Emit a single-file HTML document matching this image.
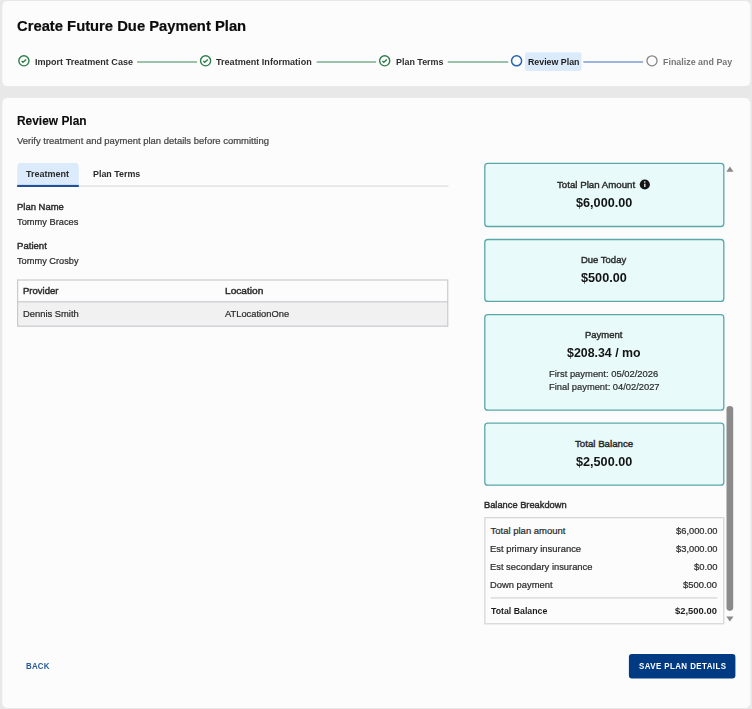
<!DOCTYPE html>
<html lang="en">
<head>
<meta charset="utf-8">
<title>Create Future Due Payment Plan</title>
<style>
*{box-sizing:border-box;margin:0;padding:0}
html,body{width:752px;height:709px;overflow:hidden}
body{background:#e8e8e8;font-family:"Liberation Sans",Arial,sans-serif;color:#1e1e1e;position:relative}
.t{position:absolute;white-space:nowrap;line-height:normal;transform-origin:0 0}
#shapes{position:absolute;left:0;top:0;width:752px;height:709px}
</style>
</head>
<body>
<svg id="shapes" viewBox="0 0 752 709">
<defs><filter id="soft" x="-5%" y="-5%" width="110%" height="110%"><feGaussianBlur stdDeviation="0.45"/></filter></defs>
<g filter="url(#soft)"><rect x="2.3" y="1.1" width="748" height="85" rx="5" fill="#fcfcfc"/><rect x="2.3" y="98.1" width="748" height="609.8" rx="5" fill="#fcfcfc"/></g>
<circle cx="23.9" cy="60.8" r="5.05" fill="none" stroke="#2e7d4b" stroke-width="1.4"/><path d="M21.60 60.90 L23.00 62.20 L26.10 59.40" fill="none" stroke="#2e7d4b" stroke-width="1.4"/>
<rect x="137.1" y="61.3" width="59.9" height="1.4" fill="#74ab86"/>
<circle cx="205.6" cy="60.8" r="5.05" fill="none" stroke="#2e7d4b" stroke-width="1.4"/><path d="M203.30 60.90 L204.70 62.20 L207.80 59.40" fill="none" stroke="#2e7d4b" stroke-width="1.4"/>
<rect x="316.6" y="61.3" width="59.6" height="1.4" fill="#74ab86"/>
<circle cx="384.7" cy="60.8" r="5.05" fill="none" stroke="#2e7d4b" stroke-width="1.4"/><path d="M382.40 60.90 L383.80 62.20 L386.90 59.40" fill="none" stroke="#2e7d4b" stroke-width="1.4"/>
<rect x="447.7" y="61.3" width="60.6" height="1.4" fill="#74ab86"/>
<circle cx="516.6" cy="60.8" r="5.05" fill="none" stroke="#2563b5" stroke-width="1.5"/>
<rect x="525" y="52.2" width="56.5" height="18.8" fill="#dcebfb" rx="2"/>
<rect x="583.4" y="61.3" width="59.6" height="1.4" fill="#7298cf"/>
<circle cx="652" cy="60.8" r="5.05" fill="none" stroke="#828282" stroke-width="1.25"/>
<rect x="17.2" y="185.3" width="431.3" height="1.6" fill="#e4e4e4"/>
<path d="M17.2 187 V166.9 a4 4 0 0 1 4 -4 H74.8 a4 4 0 0 1 4 4 V187 Z" fill="#dcebfb"/>
<rect x="17.2" y="184.9" width="61.6" height="2.1" fill="#1f4e9a"/>
<rect x="17.6" y="280.0" width="430.15" height="46.2" fill="#fcfcfc"/>
<rect x="17.6" y="301.8" width="430.15" height="24.4" fill="#f1f1f1"/>
<rect x="17.6" y="301.2" width="430.15" height="1.2" fill="#c8cace"/>
<rect x="17.6" y="280.0" width="430.15" height="46.2" fill="none" stroke="#c8cace" stroke-width="1.2"/>
<rect x="484.8" y="163.4" width="239.0" height="63.1" fill="#e8fbfa" rx="3" stroke="#5aa7a9" stroke-width="1.3"/>
<rect x="484.8" y="239.5" width="239.0" height="61.9" fill="#e8fbfa" rx="3" stroke="#5aa7a9" stroke-width="1.3"/>
<rect x="484.8" y="314.7" width="239.0" height="95.5" fill="#e8fbfa" rx="3" stroke="#5aa7a9" stroke-width="1.3"/>
<rect x="484.8" y="423.2" width="239.0" height="62.0" fill="#e8fbfa" rx="3" stroke="#5aa7a9" stroke-width="1.3"/>
<circle cx="644.8" cy="184.5" r="5.1" fill="#161616"/><rect x="644.2" y="183.7" width="1.25" height="3.3" fill="#fff"/><circle cx="644.8" cy="182" r="0.8" fill="#fff"/>
<rect x="484.9" y="517.7" width="238.85" height="106.1" fill="#fcfcfc" stroke="#d4d4d4" stroke-width="1.2"/>
<rect x="490.8" y="597.2" width="226.5" height="1.4" fill="#d9d9d9"/>
<path d="M726.3 171.8 L729.9 166.6 L733.5 171.8 Z" fill="#8a8a8a"/>
<rect x="726.5" y="406" width="6.7" height="204.9" fill="#8b8b8b" rx="3.3"/>
<path d="M726.3 616.4 L729.9 621.6 L733.5 616.4 Z" fill="#8a8a8a"/>
<rect x="628.9" y="654.1" width="106.5" height="24.3" fill="#003a83" rx="3"/>
</svg>
<div class="t" style="left:16.50px;top:17px;font-size:15px;font-weight:bold;letter-spacing:0.000px;transform:scaleX(0.9852);color:#0c0c0c;-webkit-text-stroke:0.2px;">Create Future Due Payment Plan</div>
<div class="t" style="left:34.50px;top:56px;font-size:9.4px;font-weight:bold;letter-spacing:0.000px;transform:scaleX(0.9644);color:#2e2e2e;">Import Treatment Case</div>
<div class="t" style="left:215.50px;top:56px;font-size:9.4px;font-weight:bold;letter-spacing:0.000px;transform:scaleX(0.9670);color:#2e2e2e;">Treatment Information</div>
<div class="t" style="left:395.50px;top:56px;font-size:9.4px;font-weight:bold;letter-spacing:0.000px;transform:scaleX(0.9528);color:#2e2e2e;">Plan Terms</div>
<div class="t" style="left:527.50px;top:56px;font-size:9.4px;font-weight:bold;letter-spacing:0.000px;transform:scaleX(0.9400);color:#1c1c1c;">Review Plan</div>
<div class="t" style="left:662.50px;top:56px;font-size:9.4px;font-weight:bold;letter-spacing:0.000px;transform:scaleX(0.9493);color:#777777;">Finalize and Pay</div>
<div class="t" style="left:16.50px;top:114px;font-size:11.9px;font-weight:bold;letter-spacing:0.000px;transform:scaleX(1.0021);color:#0c0c0c;-webkit-text-stroke:0.12px;">Review Plan</div>
<div class="t" style="left:16.50px;top:136px;font-size:9.3px;font-weight:normal;letter-spacing:0.000px;transform:scaleX(1.0178);color:#444444;-webkit-text-stroke:0.22px;">Verify treatment and payment plan details before committing</div>
<div class="t" style="left:25.50px;top:169px;font-size:9.2px;font-weight:bold;letter-spacing:0.000px;transform:scaleX(0.9815);color:#2b2b2b;">Treatment</div>
<div class="t" style="left:92.50px;top:169px;font-size:9.2px;font-weight:bold;letter-spacing:0.000px;transform:scaleX(0.9681);color:#2b2b2b;">Plan Terms</div>
<div class="t" style="left:16.50px;top:201px;font-size:9.5px;font-weight:normal;letter-spacing:0.000px;transform:scaleX(0.9955);color:#2b2b2b;-webkit-text-stroke:0.42px;">Plan Name</div>
<div class="t" style="left:16.50px;top:216px;font-size:9.5px;font-weight:normal;letter-spacing:0.000px;transform:scaleX(0.9762);color:#2b2b2b;-webkit-text-stroke:0.22px;">Tommy Braces</div>
<div class="t" style="left:16.50px;top:240px;font-size:9.5px;font-weight:normal;letter-spacing:0.000px;transform:scaleX(1.0092);color:#2b2b2b;-webkit-text-stroke:0.42px;">Patient</div>
<div class="t" style="left:16.50px;top:255px;font-size:9.5px;font-weight:normal;letter-spacing:0.000px;transform:scaleX(0.9727);color:#2b2b2b;-webkit-text-stroke:0.22px;">Tommy Crosby</div>
<div class="t" style="left:22.50px;top:286px;font-size:9.3px;font-weight:normal;letter-spacing:0.000px;transform:scaleX(1.0248);color:#2b2b2b;-webkit-text-stroke:0.42px;">Provider</div>
<div class="t" style="left:224.50px;top:286px;font-size:9.3px;font-weight:normal;letter-spacing:0.000px;transform:scaleX(1.0903);color:#2b2b2b;-webkit-text-stroke:0.42px;">Location</div>
<div class="t" style="left:22.50px;top:309px;font-size:9.3px;font-weight:normal;letter-spacing:0.000px;transform:scaleX(1.0080);color:#2b2b2b;-webkit-text-stroke:0.22px;">Dennis Smith</div>
<div class="t" style="left:224.50px;top:309px;font-size:9.3px;font-weight:normal;letter-spacing:0.000px;transform:scaleX(1.0026);color:#2b2b2b;-webkit-text-stroke:0.22px;">ATLocationOne</div>
<div class="t" style="left:556.50px;top:179px;font-size:9.7px;font-weight:normal;letter-spacing:0.000px;transform:scaleX(1.0005);color:#2b2b2b;-webkit-text-stroke:0.42px;">Total Plan Amount</div>
<div class="t" style="left:575.50px;top:196px;font-size:12.3px;font-weight:bold;letter-spacing:0.000px;transform:scaleX(1.0297);color:#141414;">$6,000.00</div>
<div class="t" style="left:580.50px;top:254px;font-size:9.7px;font-weight:normal;letter-spacing:0.000px;transform:scaleX(0.9785);color:#2b2b2b;-webkit-text-stroke:0.42px;">Due Today</div>
<div class="t" style="left:580.50px;top:271px;font-size:12.3px;font-weight:bold;letter-spacing:0.000px;transform:scaleX(1.0312);color:#141414;">$500.00</div>
<div class="t" style="left:585.00px;top:329px;font-size:9.7px;font-weight:normal;letter-spacing:0.000px;transform:scaleX(0.9778);color:#2b2b2b;-webkit-text-stroke:0.42px;">Payment</div>
<div class="t" style="left:566.50px;top:346px;font-size:12.3px;font-weight:bold;letter-spacing:0.000px;transform:scaleX(1.0059);color:#141414;">$208.34 / mo</div>
<div class="t" style="left:548.50px;top:368px;font-size:9.7px;font-weight:normal;letter-spacing:0.000px;transform:scaleX(0.9708);color:#2b2b2b;-webkit-text-stroke:0.22px;">First payment: 05/02/2026</div>
<div class="t" style="left:548.50px;top:381px;font-size:9.7px;font-weight:normal;letter-spacing:0.000px;transform:scaleX(0.9638);color:#2b2b2b;-webkit-text-stroke:0.22px;">Final payment: 04/02/2027</div>
<div class="t" style="left:575.00px;top:438px;font-size:9.7px;font-weight:normal;letter-spacing:0.000px;transform:scaleX(1.0000);color:#2b2b2b;-webkit-text-stroke:0.42px;">Total Balance</div>
<div class="t" style="left:575.50px;top:455px;font-size:12.3px;font-weight:bold;letter-spacing:0.000px;transform:scaleX(1.0283);color:#141414;">$2,500.00</div>
<div class="t" style="left:483.50px;top:499px;font-size:9.5px;font-weight:normal;letter-spacing:0.000px;transform:scaleX(0.9775);color:#2b2b2b;-webkit-text-stroke:0.42px;">Balance Breakdown</div>
<div class="t" style="left:490.50px;top:525px;font-size:9.5px;font-weight:normal;letter-spacing:0.000px;transform:scaleX(1.0000);color:#2b2b2b;-webkit-text-stroke:0.22px;">Total plan amount</div>
<div class="t" style="left:675.50px;top:525px;font-size:9.5px;font-weight:normal;letter-spacing:0.000px;transform:scaleX(0.9827);color:#2b2b2b;-webkit-text-stroke:0.22px;">$6,000.00</div>
<div class="t" style="left:489.50px;top:543px;font-size:9.5px;font-weight:normal;letter-spacing:0.000px;transform:scaleX(0.9914);color:#2b2b2b;-webkit-text-stroke:0.22px;">Est primary insurance</div>
<div class="t" style="left:675.50px;top:543px;font-size:9.5px;font-weight:normal;letter-spacing:0.000px;transform:scaleX(0.9827);color:#2b2b2b;-webkit-text-stroke:0.22px;">$3,000.00</div>
<div class="t" style="left:489.50px;top:561px;font-size:9.5px;font-weight:normal;letter-spacing:0.000px;transform:scaleX(0.9848);color:#2b2b2b;-webkit-text-stroke:0.22px;">Est secondary insurance</div>
<div class="t" style="left:693.50px;top:561px;font-size:9.5px;font-weight:normal;letter-spacing:0.000px;transform:scaleX(0.9930);color:#2b2b2b;-webkit-text-stroke:0.22px;">$0.00</div>
<div class="t" style="left:489.50px;top:579px;font-size:9.5px;font-weight:normal;letter-spacing:0.000px;transform:scaleX(0.9871);color:#2b2b2b;-webkit-text-stroke:0.22px;">Down payment</div>
<div class="t" style="left:683.00px;top:579px;font-size:9.5px;font-weight:normal;letter-spacing:0.000px;transform:scaleX(0.9910);color:#2b2b2b;-webkit-text-stroke:0.22px;">$500.00</div>
<div class="t" style="left:490.50px;top:605px;font-size:9.5px;font-weight:bold;letter-spacing:0.000px;transform:scaleX(0.9228);color:#1c1c1c;">Total Balance</div>
<div class="t" style="left:675.00px;top:605px;font-size:9.5px;font-weight:bold;letter-spacing:0.000px;transform:scaleX(0.9915);color:#1c1c1c;">$2,500.00</div>
<div class="t" style="left:25.50px;top:661px;font-size:9.2px;font-weight:bold;letter-spacing:0.218px;transform:scaleX(0.8600);color:#2a5a9a;">BACK</div>
<div class="t" style="left:638.50px;top:661px;font-size:9.2px;font-weight:bold;letter-spacing:0.500px;transform:scaleX(0.8600);color:#ffffff;">SAVE PLAN DETAILS</div>
</body>
</html>
